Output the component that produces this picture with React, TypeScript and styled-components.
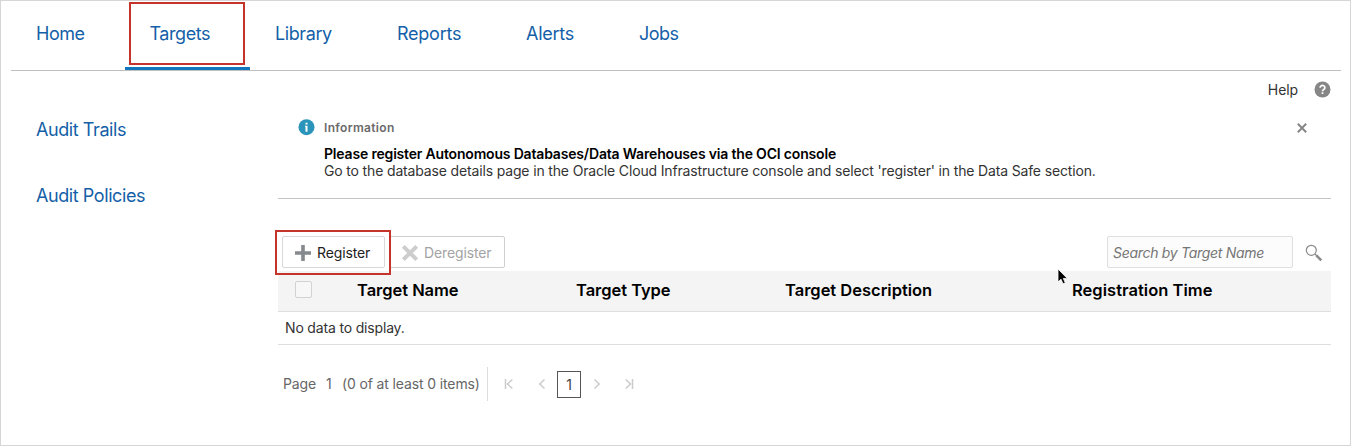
import React from "react";
import styled, { createGlobalStyle } from "styled-components";

const GlobalStyle = createGlobalStyle`
  *, *::before, *::after { box-sizing: border-box; }
  body {
    margin: 0;
    background: #fff;
    color: #333;
    font-family: Inter, "Liberation Sans", sans-serif;
    font-size: 14px;
    line-height: 17px;
  }
`;

const Page = styled.div`
  position: relative;
  width: 1351px;
  height: 446px;
  border: 1px solid #d6d6d6;
  background: #fff;
  overflow: hidden;
  padding: 0 9px 0 10px;
`;

const NavBar = styled.nav`
  display: flex;
  height: 70px;
  border-bottom: 1px solid #bfbfbf;
`;

const NavTab = styled.a<{ $width: number; $active?: boolean; $spacing?: number }>`
  position: relative;
  flex: none;
  width: ${(p) => p.$width}px;
  height: 69px;
  padding: 21px 0 0 ${(p) => (p.$active ? 24.4 : 25)}px;
  border-bottom: ${(p) => (p.$active ? "3px solid #1276bc" : "none")};
  color: #145fa8;
  font-size: 18px;
  line-height: 24px;
  letter-spacing: ${(p) => p.$spacing ?? 0}px;
  white-space: nowrap;
`;

const Highlight = styled.span<{ $top: number; $left: number; $w: number; $h: number }>`
  position: absolute;
  top: ${(p) => p.$top}px;
  left: ${(p) => p.$left}px;
  width: ${(p) => p.$w}px;
  height: ${(p) => p.$h}px;
  border: 2px solid #c5342a;
  pointer-events: none;
`;

const Body = styled.div`
  display: flex;
`;

const SideNav = styled.aside`
  display: flex;
  flex-direction: column;
  gap: 42px;
  width: 267px;
  padding: 47px 0 0 25px;
`;

const SideLink = styled.a<{ $spacing: number }>`
  color: #145fa8;
  font-size: 18px;
  line-height: 24px;
  letter-spacing: ${(p) => p.$spacing}px;
`;

const Main = styled.main`
  width: 1053px;
`;

const HelpRow = styled.div`
  display: flex;
  justify-content: flex-end;
  align-items: center;
  gap: 16px;
  height: 38px;
  padding-bottom: 1px;
  letter-spacing: -0.1px;
`;

const InfoPanel = styled.section`
  display: grid;
  grid-template-columns: 46px 1fr auto;
  height: 90px;
  border-bottom: 1px solid #c4c4c4;
`;

const InfoIcon = styled.div`
  padding: 10px 0 0 20px;
  height: 26px;
  svg { display: block; }
`;

const InfoText = styled.div`
  display: flex;
  flex-direction: column;
  padding-top: 10px;
`;

const InfoLabel = styled.div`
  color: #6a6a6a;
  font-size: 12px;
  font-weight: 600;
  letter-spacing: 0.33px;
  margin-bottom: 9px;
`;

const InfoTitle = styled.div`
  color: #000;
  font-weight: 600;
  letter-spacing: -0.18px;
`;

const InfoDetail = styled.div`
  color: #333;
  letter-spacing: -0.155px;
`;

const CloseButton = styled.div`
  padding: 14px 24px 0 0;
  svg { display: block; }
`;

const Toolbar = styled.div`
  position: relative;
  display: flex;
  align-items: center;
  height: 72px;
  padding: 37px 8px 3px 4px;
`;

const ToolButton = styled.button<{ $width: number; $disabled?: boolean }>`
  display: flex;
  align-items: center;
  gap: 5px;
  width: ${(p) => p.$width}px;
  height: 32px;
  margin-right: 4px;
  padding: 1px 0 0 11px;
  border: 1px solid ${(p) => (p.$disabled ? "#cfcfcf" : "#d9d9d9")};
  border-radius: 2px;
  background: #fff;
  color: ${(p) => (p.$disabled ? "#a3a3a3" : "#222")};
  font: 14px/17px Inter, "Liberation Sans", sans-serif;
  letter-spacing: -0.12px;
  white-space: nowrap;
`;

const SearchField = styled.input`
  width: 186px;
  height: 32px;
  margin: 0 12px 0 auto;
  padding: 1px 0 0 5px;
  border: 1px solid #dfdfdf;
  border-radius: 2px;
  background: #fcfcfc;
  font: italic 14px/17px Inter, "Liberation Sans", sans-serif;
  letter-spacing: -0.3px;
  outline: none;
  &::placeholder { color: #757575; opacity: 1; }
`;

const SearchIcon = styled.svg`
  margin-top: 2px;
`;

const HeaderRow = styled.div`
  display: grid;
  grid-template-columns: 79px 219px 209px 287px 1fr;
  align-items: center;
  height: 41px;
  background: #f4f4f4;
  border-bottom: 1px solid #dedede;
  color: #000;
  font-size: 16.5px;
  font-weight: 600;
`;

const HeaderCell = styled.div<{ $spacing: number }>`
  letter-spacing: ${(p) => p.$spacing}px;
  padding-bottom: 2px;
`;

const CheckBox = styled.div`
  width: 17px;
  height: 17px;
  margin: 0 0 4px 17px;
  border: 1px solid #d2d2d2;
  border-radius: 2px;
  background: #f7f7f7;
`;

const EmptyRow = styled.div`
  display: flex;
  align-items: center;
  height: 33px;
  padding: 0 0 2px 7px;
  border-bottom: 1px solid #dedede;
  letter-spacing: -0.17px;
`;

const Pager = styled.div`
  display: flex;
  align-items: center;
  height: 34px;
  margin-top: 22px;
  padding-left: 5px;
  color: #666;
`;

const PagerText = styled.span<{ $width: number; $spacing?: number }>`
  width: ${(p) => p.$width}px;
  padding-bottom: 1px;
  letter-spacing: ${(p) => p.$spacing ?? 0}px;
  white-space: nowrap;
`;

const PagerDivider = styled.span`
  width: 1px;
  height: 34px;
  background: #dcdcdc;
`;

const PageArrow = styled.span<{ $width: number }>`
  display: flex;
  justify-content: center;
  width: ${(p) => p.$width}px;
`;

const CurrentPage = styled.span`
  display: flex;
  align-items: center;
  justify-content: center;
  width: 24px;
  height: 27px;
  margin-left: 4px;
  border: 1px solid #555;
  color: #444;
`;

const Cursor = styled.svg`
  position: absolute;
  left: 1055px;
  top: 266px;
`;

const columns = [
  { label: "Target Name", spacing: -0.04 },
  { label: "Target Type", spacing: -0.04 },
  { label: "Target Description", spacing: -0.01 },
  { label: "Registration Time", spacing: 0.03 },
];

const Arrow = ({ flip, end }: { flip?: boolean; end?: boolean }) => (
  <svg width="10" height="12" viewBox="0 0 10 12" fill="none" stroke="#cbcbcb" strokeWidth="1.5">
    <g transform={flip ? "translate(10 0) scale(-1 1)" : undefined}>
      <path d={end ? "M8.3 1.5 3.5 6l4.8 4.5M1.5 1v10" : "M7.5 1.5 2.8 6l4.7 4.5"} />
    </g>
  </svg>
);

export default function App() {
  return (
    <>
      <GlobalStyle />
      <Page>
        <NavBar>
          <NavTab $width={114} $spacing={-0.45}>Home</NavTab>
          <NavTab $width={125} $active $spacing={-0.4}>
            Targets
            <Highlight $top={1} $left={4} $w={116} $h={63} />
          </NavTab>
          <NavTab $width={122} $spacing={-0.4}>Library</NavTab>
          <NavTab $width={129} $spacing={-0.25}>Reports</NavTab>
          <NavTab $width={113} $spacing={-0.25}>Alerts</NavTab>
          <NavTab $width={90} $spacing={-0.5}>Jobs</NavTab>
        </NavBar>
        <Body>
          <SideNav>
            <SideLink $spacing={-0.42}>Audit Trails</SideLink>
            <SideLink $spacing={-0.42}>Audit Policies</SideLink>
          </SideNav>
          <Main>
            <HelpRow>
              <span>Help</span>
              <svg width="17" height="17" viewBox="0 0 17 17">
                <circle cx="8.5" cy="8.5" r="8" fill="#868686" />
                <path d="M6.1 6.7a2.4 2.2 0 1 1 3.7 1.8c-.9.6-1.3.8-1.3 1.7" fill="none" stroke="#fff" strokeWidth="1.7" />
                <rect x="7.6" y="11.2" width="1.8" height="1.8" fill="#fff" />
              </svg>
            </HelpRow>
            <InfoPanel>
              <InfoIcon>
                <svg width="17" height="17" viewBox="0 0 17 17">
                  <circle cx="8.5" cy="8.2" r="8" fill="#2a94ba" />
                  <rect x="7.5" y="3.7" width="2" height="1.8" fill="#fff" />
                  <path d="M7 6.8h2.5v5.9h-2V7.8H7z" fill="#fff" />
                </svg>
              </InfoIcon>
              <InfoText>
                <InfoLabel>Information</InfoLabel>
                <InfoTitle>Please register Autonomous Databases/Data Warehouses via the OCI console</InfoTitle>
                <InfoDetail>
                  Go to the database details page in the Oracle Cloud Infrastructure console and select 'register' in the Data Safe section.
                </InfoDetail>
              </InfoText>
              <CloseButton>
                <svg width="10" height="10" viewBox="0 0 10 10" stroke="#868686" strokeWidth="2">
                  <path d="M.8.8l8.4 8.4M9.2.8.8 9.2" />
                </svg>
              </CloseButton>
            </InfoPanel>
            <Toolbar>
              <ToolButton $width={103}>
                <svg width="18" height="18" viewBox="0 0 18 18" fill="#868a8e">
                  <path d="M7.2 1h3.6v6.2H17v3.6h-6.2V17H7.2v-6.2H1V7.2h6.2z" />
                </svg>
                Register
              </ToolButton>
              <ToolButton $width={116} $disabled>
                <svg width="18" height="18" viewBox="0 0 18 18" stroke="#cdcdcd" strokeWidth="4">
                  <path d="M2.3 2.3l13.4 13.4M15.7 2.3 2.3 15.7" />
                </svg>
                Deregister
              </ToolButton>
              <Highlight $top={31} $left={-3} $w={116} $h={45} />
              <SearchField placeholder="Search by Target Name" />
              <SearchIcon width="18" height="18" viewBox="0 0 18 18" fill="none" stroke="#8a8a8a">
                <circle cx="6.3" cy="6.3" r="5" strokeWidth="1.2" />
                <path d="M10 10l2 2" strokeWidth="1.2" />
                <path d="M11.3 11.3l5 5" strokeWidth="2.6" />
              </SearchIcon>
            </Toolbar>
            <HeaderRow>
              <CheckBox />
              {columns.map((c) => (
                <HeaderCell key={c.label} $spacing={c.spacing}>{c.label}</HeaderCell>
              ))}
            </HeaderRow>
            <EmptyRow>No data to display.</EmptyRow>
            <Pager>
              <PagerText $width={43} $spacing={-0.15}>Page</PagerText>
              <PagerText $width={16}>1</PagerText>
              <PagerText $width={145} $spacing={-0.13}>(0 of at least 0 items)</PagerText>
              <PagerDivider />
              <PageArrow $width={42}><Arrow end /></PageArrow>
              <PageArrow $width={23}><Arrow /></PageArrow>
              <CurrentPage>1</CurrentPage>
              <PageArrow $width={31}><Arrow flip /></PageArrow>
              <PageArrow $width={33}><Arrow flip end /></PageArrow>
            </Pager>
          </Main>
        </Body>
        <Cursor width="13" height="20" viewBox="0 0 13 20">
          <path d="M2 2v13l3-2.8 2 4.6 2.3-1-2-4.4h4z" fill="#000" stroke="#fff" strokeWidth="0.8" />
        </Cursor>
      </Page>
    </>
  );
}
